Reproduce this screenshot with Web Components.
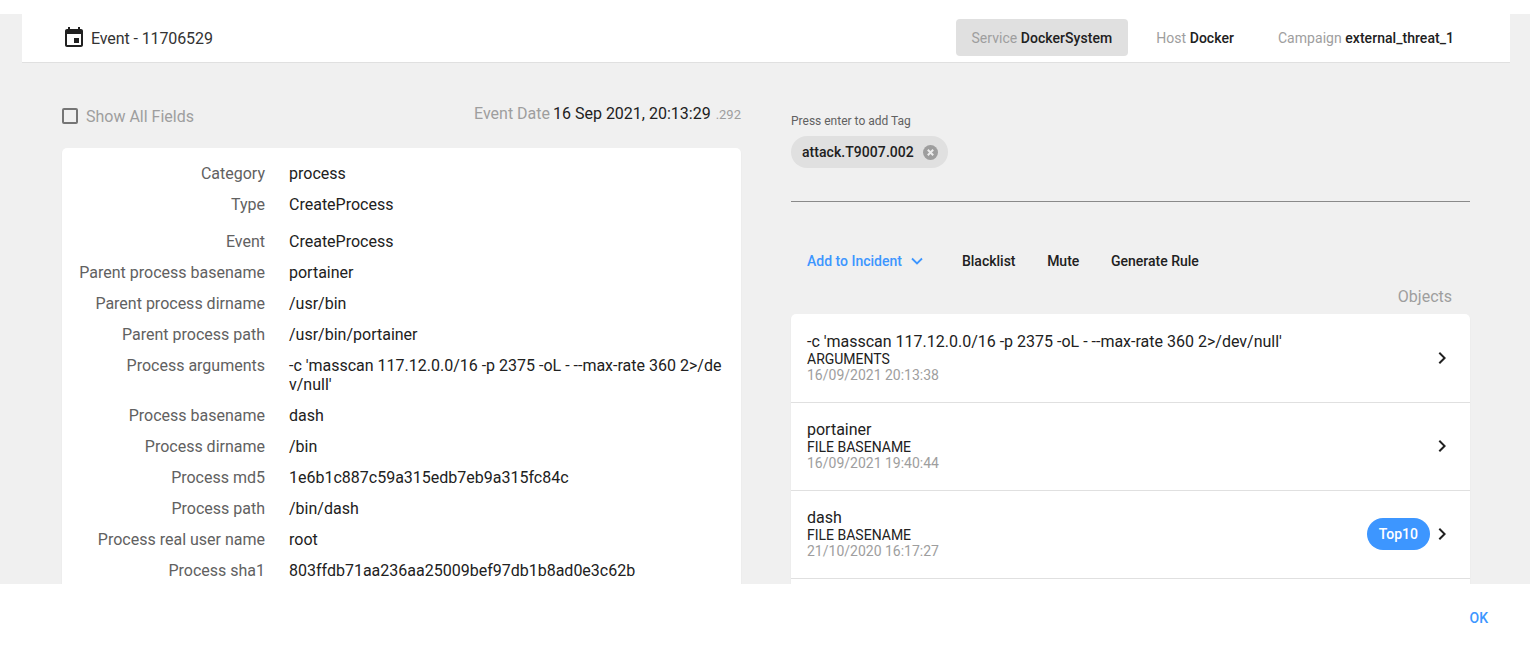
<!DOCTYPE html>
<html><head><meta charset="utf-8"><style>
html,body{margin:0;padding:0;height:649px;overflow:hidden;background:#fff;font-family:Roboto,sans-serif}
</style></head><body>
<event-dialog>
  <event-header slot="header" title-text="Event - 11706529">
    <tab-chip active label="Service" value="DockerSystem"></tab-chip>
    <tab-chip label="Host" value="Docker"></tab-chip>
    <tab-chip label="Campaign" value="external_threat_1"></tab-chip>
  </event-header>
  <div slot="left">
    <left-top></left-top>
    <field-card>
      <field-row k="Category" v="process"></field-row>
      <field-row k="Type" v="CreateProcess" style="margin-bottom:6px"></field-row>
      <field-row k="Event" v="CreateProcess"></field-row>
      <field-row k="Parent process basename" v="portainer"></field-row>
      <field-row k="Parent process dirname" v="/usr/bin"></field-row>
      <field-row k="Parent process path" v="/usr/bin/portainer"></field-row>
      <field-row k="Process arguments" v="-c 'masscan 117.12.0.0/16 -p 2375 -oL - --max-rate 360 2>/dev/null'"></field-row>
      <field-row k="Process basename" v="dash"></field-row>
      <field-row k="Process dirname" v="/bin"></field-row>
      <field-row k="Process md5" v="1e6b1c887c59a315edb7eb9a315fc84c"></field-row>
      <field-row k="Process path" v="/bin/dash"></field-row>
      <field-row k="Process real user name" v="root"></field-row>
      <field-row k="Process sha1" v="803ffdb71aa236aa25009bef97db1b8ad0e3c62b"></field-row>
    </field-card>
  </div>
  <div slot="right">
    <tag-input></tag-input>
    <action-bar></action-bar>
    <object-list>
      <object-item name="-c 'masscan 117.12.0.0/16 -p 2375 -oL - --max-rate 360 2>/dev/null'" kind="ARGUMENTS" date="16/09/2021 20:13:38"></object-item>
      <object-item name="portainer" kind="FILE BASENAME" date="16/09/2021 19:40:44"></object-item>
      <object-item name="dash" kind="FILE BASENAME" date="21/10/2020 16:17:27" badge="Top10"></object-item>
      <object-item name="" kind="" date=""></object-item>
    </object-list>
  </div>
</event-dialog>
<script>
function def(name, css, html){
  customElements.define(name, class extends HTMLElement{
    constructor(){super();this.attachShadow({mode:'open'});}
    connectedCallback(){
      const a=n=>{const v=this.getAttribute(n);return v==null?'':v.replace(/&/g,'&amp;').replace(/</g,'&lt;').replace(/"/g,'&quot;')};
      this.shadowRoot.innerHTML='<style>'+css+'</style>'+(typeof html==='function'?html(a,this):html);
    }
  });
}
def('event-dialog',`
:host{display:flex;flex-direction:column;height:649px}
.top{height:14px;flex:none}
.body{height:570px;flex:none;background:#f0f0f0;overflow:hidden;padding:0 20px 0 22px;box-sizing:border-box}
.cols{display:flex;gap:50px;padding:0 40px}
.cols>*{display:block;flex:0 0 679px;min-width:0}
.foot{flex:1;display:flex;justify-content:flex-end;align-items:flex-start;padding:26px 42px 0 0}
.ok{font:500 14px/16px Roboto,sans-serif;color:#3d96ff}
`,`<div class="top"></div><div class="body"><slot name="header"></slot><div class="cols"><div><slot name="left"></slot></div><div><slot name="right"></slot></div></div></div><div class="foot"><span class="ok">OK</span></div>`);
def('event-header',`
:host{display:flex;align-items:flex-start;height:48px;background:#fff;border-bottom:1px solid #e0e0e0;padding:0 40px 0 40px}
.t{display:flex;align-items:center;gap:5px;height:48px;font-size:16px;letter-spacing:-.1px;color:#333}
svg{display:block;width:24px;height:24px;fill:#212121}
.r{margin-left:auto;display:flex;gap:12px;padding-top:5px}
`,a=>`<div class="t"><svg viewBox="0 0 24 24"><path d="M17 12h-5v5h5v-5zM16 1v2H8V1H6v2H5c-1.11 0-1.99.9-1.99 2L3 19c0 1.1.89 2 2 2h14c1.1 0 2-.9 2-2V5c0-1.1-.9-2-2-2h-1V1h-2zm3 18H5V8h14v11z"/></svg><span>${a('title-text')}</span></div><div class="r"><slot></slot></div>`);
def('tab-chip',`
:host{display:block;height:37px;line-height:38px;padding:0 16px;border-radius:4px;font-size:14px;font-weight:500;letter-spacing:.04px;color:#212121;white-space:nowrap}
:host([active]){background:#e0e0e0}
span{color:#9e9e9e;font-weight:400}
`,a=>`<span>${a('label')}</span> ${a('value')}`);
def('left-top',`
:host{display:flex;justify-content:space-between;align-items:center;height:85px;box-sizing:border-box;padding-top:21px}
.c{display:flex;align-items:center;gap:8px;font-size:16px;color:#9e9e9e}
.box{width:12px;height:12px;border:2px solid #757575;border-radius:2px}
.d{font-size:16px;color:#9e9e9e;margin-top:-6px}
.d b{font-weight:400;color:#212121;margin:0 1px 0 -1px}
.d small{font-size:13px}
`,`<div class="c"><div class="box"></div>Show All Fields</div><div class="d">Event Date <b>16 Sep 2021, 20:13:29</b> <small>.292</small></div>`);
def('field-card',`
:host{display:block;background:#fff;border-radius:5px;padding:10px 16px 40px 0;box-shadow:0 1px 2px rgba(0,0,0,.06)}
`,`<slot></slot>`);
def('field-row',`
:host{display:grid;grid-template-columns:203px 1fr;column-gap:24px;padding:6px 0;font-size:16px;line-height:19px}
.k{text-align:right;color:#616161}
.v{color:#212121;word-break:break-all}
`,a=>`<div class="k">${a('k')}</div><div class="v">${a('v')}</div>`);
def('tag-input',`
:host{display:block;height:139px;box-sizing:border-box;border-bottom:1px solid #8a8a8a;padding-top:51px}
.l{font-size:12px;line-height:14px;color:#616161}
.chip{display:inline-flex;align-items:center;gap:9px;height:32px;margin-top:8px;padding:0 10px 0 11px;border-radius:16px;background:#e0e0e0;font-size:14px;font-weight:500;letter-spacing:.05px;color:#212121}
svg{display:block;width:15px;height:15px}
`,`<div class="l">Press enter to add Tag</div><div class="chip">attack.T9007.002<svg viewBox="0 0 15 15"><circle cx="7.5" cy="7.5" r="7.5" fill="#9e9e9e"/><path d="M4.800 4.800l5.400 5.400M10.200 4.800l-5.400 5.400" stroke="#ececec" stroke-width="2"/></svg></div>`);
def('action-bar',`
:host{display:flex;align-items:center;height:36px;margin-top:41px;padding-left:16px;font-size:14px;font-weight:500;color:#212121}
.a{color:#3d96ff;display:flex;align-items:center;gap:7px;margin-right:37px}
svg{display:block;width:16px;height:16px;fill:none;stroke:#3d96ff;stroke-width:1.8}
.b{margin-right:31.6px}
`,`<div class="a">Add to Incident<svg viewBox="0 0 16 16"><path d="M3 5.500l5 5 5-5"/></svg></div><div class="b">Blacklist</div><div class="b">Mute</div><div class="b">Generate Rule</div>`);
def('object-list',`
:host{display:block}
.h{text-align:right;font-size:16px;line-height:19px;color:#9e9e9e;padding:8px 18px 8px 0}
.l{background:#fff;border-radius:5px;overflow:hidden;padding-top:1px;box-shadow:0 1px 2px rgba(0,0,0,.06)}
`,`<div class="h">Objects</div><div class="l"><slot></slot></div>`);
def('object-item',`
:host{display:flex;align-items:center;height:88px;box-sizing:border-box;border-bottom:1px solid #e0e0e0;padding:0 23px 2px 16px}
.m{flex:1;min-width:0}
.n{font-size:16px;line-height:19px;color:#212121}
.k{font-size:14px;line-height:16px;color:#212121}
.d{font-size:14px;line-height:16px;color:#9e9e9e}
.b{height:32px;line-height:32px;padding:0 12px;border-radius:16px;background:#3d96ff;color:#fff;font-size:14px;font-weight:500;margin-right:8px}
svg{display:block;width:9px;height:14px;fill:#212121}
`,a=>`<div class="m"><div class="n">${a('name')}</div><div class="k">${a('kind')}</div><div class="d">${a('date')}</div></div>${a('badge')?`<div class="b">${a('badge')}</div>`:''}<svg viewBox="8 5 9 14"><path d="M10 6L8.590 7.410 13.170 12l-4.580 4.590L10 18l6-6z"/></svg>`);
</script>
</body></html>
